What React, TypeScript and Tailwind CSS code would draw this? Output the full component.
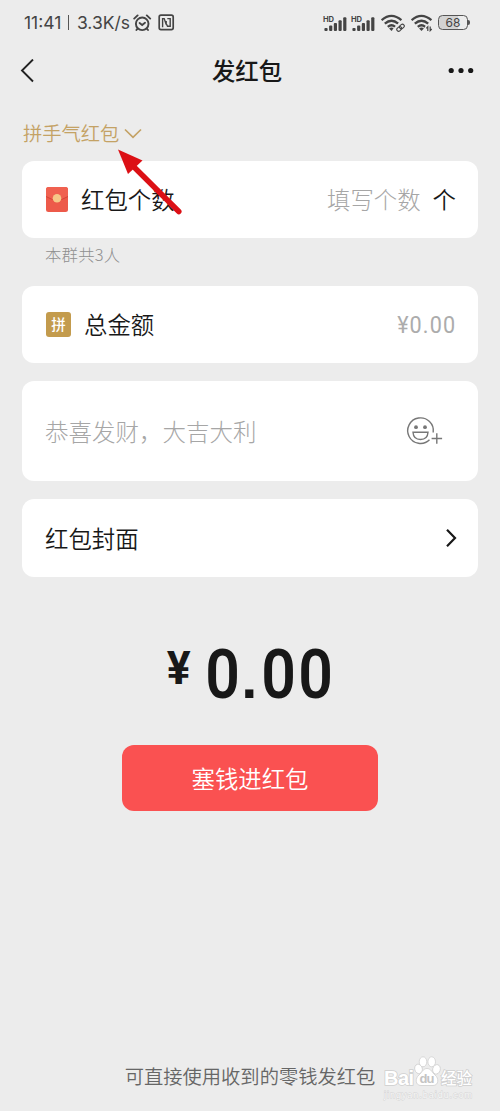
import type { ReactNode } from 'react';

function Signal() {
  return (
    <svg className="h-[18px] w-[25px] overflow-visible" viewBox="0 0 25 18" fill="#444">
      <text x="-1" y="7.6" fontSize="7.6" fontWeight="700" fontFamily="Inter, sans-serif" textLength="11">HD</text>
      <rect x="0.4" y="14" width="3.2" height="3" rx="1" />
      <rect x="5.1" y="11.6" width="3.2" height="5.4" rx="1" />
      <rect x="9.8" y="9" width="3.2" height="8" rx="1" />
      <rect x="14.5" y="6.2" width="3.2" height="10.8" rx="1" />
      <rect x="19.2" y="3.2" width="3.2" height="13.8" rx="1" />
    </svg>
  );
}

function Wifi({ children }: { children: ReactNode }) {
  return (
    <svg className="h-[18px] w-6" viewBox="0 0 24 18" fill="none" stroke="#444" strokeWidth="2.3">
      <path d="M0.6 6.2Q10.500 -2.4 20.4 6.2M3.8 9.6Q10.500 3.8 17.2 9.6M6.8 12.9Q10.500 9.5 14.2 12.9" />
      <path d="M8.1 14.4Q10.5 12.4 12.9 14.4L10.5 17Z" fill="#444" stroke="none" />
      {children}
    </svg>
  );
}

function StatusBar() {
  return (
    <div className="flex h-[45px] items-center pl-6 pr-[30px] text-[#444]">
      <div className="flex w-[106px] items-center whitespace-nowrap font-['Inter'] text-[17.5px] font-normal leading-[22px]">
        <span>11:41</span>
        <span className="ml-[7px] h-[15px] w-[1.5px] bg-[#555]" />
        <span className="ml-[8px]">3.3K/s</span>
      </div>
      <svg className="ml-[3px] h-[18px] w-[19px]" viewBox="0 0 19 18" fill="none" stroke="#444" strokeWidth="1.9" strokeLinecap="round">
        <circle cx="9.2" cy="9.8" r="6.3" />
        <path d="M1.2 4.6 4.6 1.4M17.2 4.6 13.8 1.4M6.6 9l2.6 2 2.8-2.2M4.4 14.800l-1 1.2M14 14.800l1 1.2" />
      </svg>
      <svg className="ml-[6px] h-[17px] w-[17px]" viewBox="0 0 17 17" fill="none" stroke="#444" strokeWidth="1.7">
        <rect x="1.2" y="1.2" width="14" height="14.4" rx="1.8" />
        <path d="M4.6 13.200V4.600H6.200L8.200 10.500V7M9.300 4.600H12.200V12.300H9.500L7.500 8" strokeWidth="1.4" />
      </svg>
      <div className="ml-auto flex items-center">
        <Signal />
        <div className="ml-[3px]"><Signal /></div>
        <div className="ml-[4px]">
          <Wifi>
            <path d="M14 18 22.5 9.5" stroke="#ececec" strokeWidth="7" />
            <g transform="rotate(-42 19.4 13.7)" strokeWidth="1.1">
              <rect x="15.1" y="12" width="5.2" height="3.6" rx="1.8" />
              <rect x="18.7" y="12" width="5.2" height="3.6" rx="1.8" />
            </g>
          </Wifi>
        </div>
        <div className="ml-[6px]">
          <Wifi>
            <path d="M14.5 14.5h8" stroke="#ececec" strokeWidth="5" />
            <path d="M16.8 17v-4.3l-1.5 1.6M19.2 12.4v4.2l1.5-1.6" strokeWidth="1.2" />
          </Wifi>
        </div>
        <div className="ml-[3px] flex items-center">
          <div className="flex h-[15px] w-[30px] items-center justify-center rounded-[4.5px] border-[1.5px] border-[#555] bg-gradient-to-r from-[#d3d3d3] from-68% to-[#ececec] to-68% font-['Inter'] text-[12px] font-normal leading-none">68</div>
          <div className="h-[5px] w-[2px] rounded-r bg-[#555]" />
        </div>
      </div>
    </div>
  );
}

export default function App() {
  return (
    <main className="relative flex h-[1111px] w-[500px] flex-col overflow-hidden bg-[#ececec] font-['Noto_Sans_CJK_SC',sans-serif] font-[350] text-[#181818]">
      <StatusBar />
      <header className="flex h-[51px] items-center justify-between pl-5 pr-[26px]">
        <svg className="h-6 w-[50px]" viewBox="0 0 50 24" fill="none" stroke="#222" strokeWidth="1.9">
          <path d="M13 .5 2 11.5l11 11" />
        </svg>
        <h1 className="pb-[2px] text-[23.4px] font-medium leading-8">发红包</h1>
        <svg className="h-2 w-[50px]" viewBox="0 0 50 8" fill="#181818">
          <circle cx="27.2" cy="3.5" r="2.6" />
          <circle cx="37" cy="3.5" r="2.6" />
          <circle cx="46.7" cy="3.5" r="2.6" />
        </svg>
      </header>

      <div className="mt-[21px] flex h-8 items-center pl-[23px] text-[#c4a265]">
        <span className="text-[19.3px] leading-8">拼手气红包</span>
        <svg className="ml-[5px] h-[11px] w-[18px]" viewBox="0 0 18 11" fill="none" stroke="#c4a265" strokeWidth="1.7">
          <path d="m1 1.5 8 7.8 8-7.8" />
        </svg>
      </div>

      <section className="mx-[22px] mt-[12px] flex h-[77px] items-center rounded-[12px] bg-white pl-6 pr-[22px]">
        <svg className="h-[25px] w-[22px]" viewBox="0 0 22 25">
          <rect width="22" height="25" rx="2.5" fill="#ed5a4a" />
          <path d="M0 9.5V2.5Q0 0 2.5 0h17Q22 0 22 2.5v7Q11 16.5 0 9.5Z" fill="#f06150" />
          <path d="M0 9.5Q11 16.5 22 9.5" fill="none" stroke="#d44437" strokeWidth="1" />
          <circle cx="11" cy="11.2" r="4.3" fill="#f6c887" />
        </svg>
        <span className="ml-[13px] pb-[2px] text-[23.4px] leading-8">红包个数</span>
        <span className="ml-auto pb-[2px] text-[23.4px] font-light leading-8 text-[#a6a6a6]">填写个数</span>
        <span className="ml-3 pb-[2px] text-[23.4px] leading-8">个</span>
      </section>
      <p className="ml-[45px] mt-[4px] h-6 text-[16.4px] font-light leading-6 tracking-[0.2px] text-[#8f8f8f]">本群共3人</p>

      <section className="mx-[22px] mt-[20px] flex h-[77px] items-center rounded-[12px] bg-white pl-6 pr-[22px]">
        <div className="flex h-[25px] w-[25px] items-center justify-center rounded-[3px] bg-[#c39b4d] text-[14.5px] font-medium leading-none text-white">拼</div>
        <span className="ml-[13px] pb-[2px] text-[23.4px] leading-8">总金额</span>
        <span className="ml-auto origin-right scale-x-[0.92] font-['Roboto'] text-[23.5px] font-normal leading-8 tracking-[1.2px] text-[#acacac]">¥0.00</span>
      </section>

      <section className="mx-[22px] mt-[18px] flex h-[100px] items-center justify-between rounded-[12px] bg-white pl-[23px] pr-[35px]">
        <span className="pb-px text-[23.5px] font-light leading-8 text-[#a6a6a6]">恭喜发财，大吉大利</span>
        <svg className="h-7 w-[37px] overflow-visible" viewBox="0 0 37 28" fill="none" stroke="#777" strokeWidth="1.4">
          <path d="M23.5 22.8A12.8 12.8 0 1 1 27.2 15.5" />
          <circle cx="10" cy="10.2" r="1.9" fill="#777" stroke="none" />
          <circle cx="19" cy="10.2" r="1.9" fill="#777" stroke="none" />
          <path d="M7 15.3h15q-.4 7.2-7.500 7.2t-7.500-7.2Z" />
          <path d="M25.6 21.5h10.5M30.8 16.2v10.6" />
        </svg>
      </section>

      <section className="mx-[22px] mt-[18px] flex h-[78px] items-center justify-between rounded-[12px] bg-white pl-[23px] pr-[20px]">
        <span className="pb-px text-[23.4px] leading-8">红包封面</span>
        <svg className="h-5 w-[13px]" viewBox="0 0 13 20" fill="none" stroke="#181818" strokeWidth="2.2">
          <path d="m2 1.8 8 8.2-8 8.2" />
        </svg>
      </section>

      <div className="mt-[63px] flex h-[70px] items-start justify-center font-['Roboto']">
        <span className="mt-[5px] scale-x-95 text-[47px] font-bold leading-[46px]">¥</span>
        <div className="ml-[11px] flex text-[69px] font-semibold leading-[70px]">
          <span className="w-[37.5px] scale-x-[0.88] text-center">0</span>
          <span className="w-[18.5px] text-center font-['Liberation_Sans'] text-[58px] font-bold leading-[75px]">.</span>
          <span className="w-[37.5px] scale-x-[0.88] text-center">0</span>
          <span className="w-[37.5px] scale-x-[0.88] text-center">0</span>
        </div>
      </div>

      <button className="mx-auto mt-[35px] flex h-[66px] w-[256px] items-center justify-center rounded-[12px] bg-[#fa5151] pb-px text-[23.4px] font-[350] leading-8 text-white">塞钱进红包</button>

      <footer className="mt-auto flex h-[51px] items-start justify-center text-[19.3px] leading-8 text-[#666]">可直接使用收到的零钱发红包</footer>

      <svg className="pointer-events-none absolute left-[116px] top-[147px] h-[70px] w-[68px]" viewBox="0 0 68 70">
        <path d="M17 19 62.800 64.500" stroke="#dc1015" strokeWidth="5.5" strokeLinecap="round" />
        <path d="M2 2.5 26.5 13.5 12 27Z" fill="#dc1015" />
      </svg>

      <svg className="pointer-events-none absolute left-[380px] top-[1054px] h-[50px] w-[100px]" viewBox="0 0 100 50" fill="#fff" stroke="#cfcfcf" strokeWidth="0.8">
        <g paintOrder="stroke" fontFamily="'Liberation Sans', 'Noto Sans CJK SC', sans-serif" strokeWidth="1.6">
          <text x="4" y="31" fontSize="20" fontWeight="700" textLength="30">Bai</text>
          <text x="61" y="30" fontSize="15.5" fontWeight="500" textLength="31">经验</text>
        </g>
        <ellipse cx="38.5" cy="14.8" rx="3.8" ry="4.8" transform="rotate(-15 39 14.8)" />
        <ellipse cx="43" cy="7.8" rx="3.8" ry="5" />
        <ellipse cx="51.7" cy="7.8" rx="3.8" ry="5" />
        <ellipse cx="56.5" cy="15.3" rx="3.8" ry="4.8" transform="rotate(15 56.3 15.3)" />
        <path d="M47 14.5c4 0 5 4 8 6.5 4 3 4 10.5-2 10.5H41c-6 0-6-7.5-2-10.5 3-2.5 4-6.5 8-6.500Z" />
        <text x="39.5" y="29.2" fontSize="13" fontWeight="700" fontFamily="Liberation Sans, sans-serif" fill="#c4c4c4" stroke="none" textLength="15">du</text>
        <text x="4" y="44" fontSize="9" fontFamily="Liberation Sans, sans-serif" fill="#f8f8f8" stroke="#d4d4d4" strokeWidth="0.9" paintOrder="stroke" textLength="88">jingyan.baidu.com</text>
      </svg>
    </main>
  );
}
